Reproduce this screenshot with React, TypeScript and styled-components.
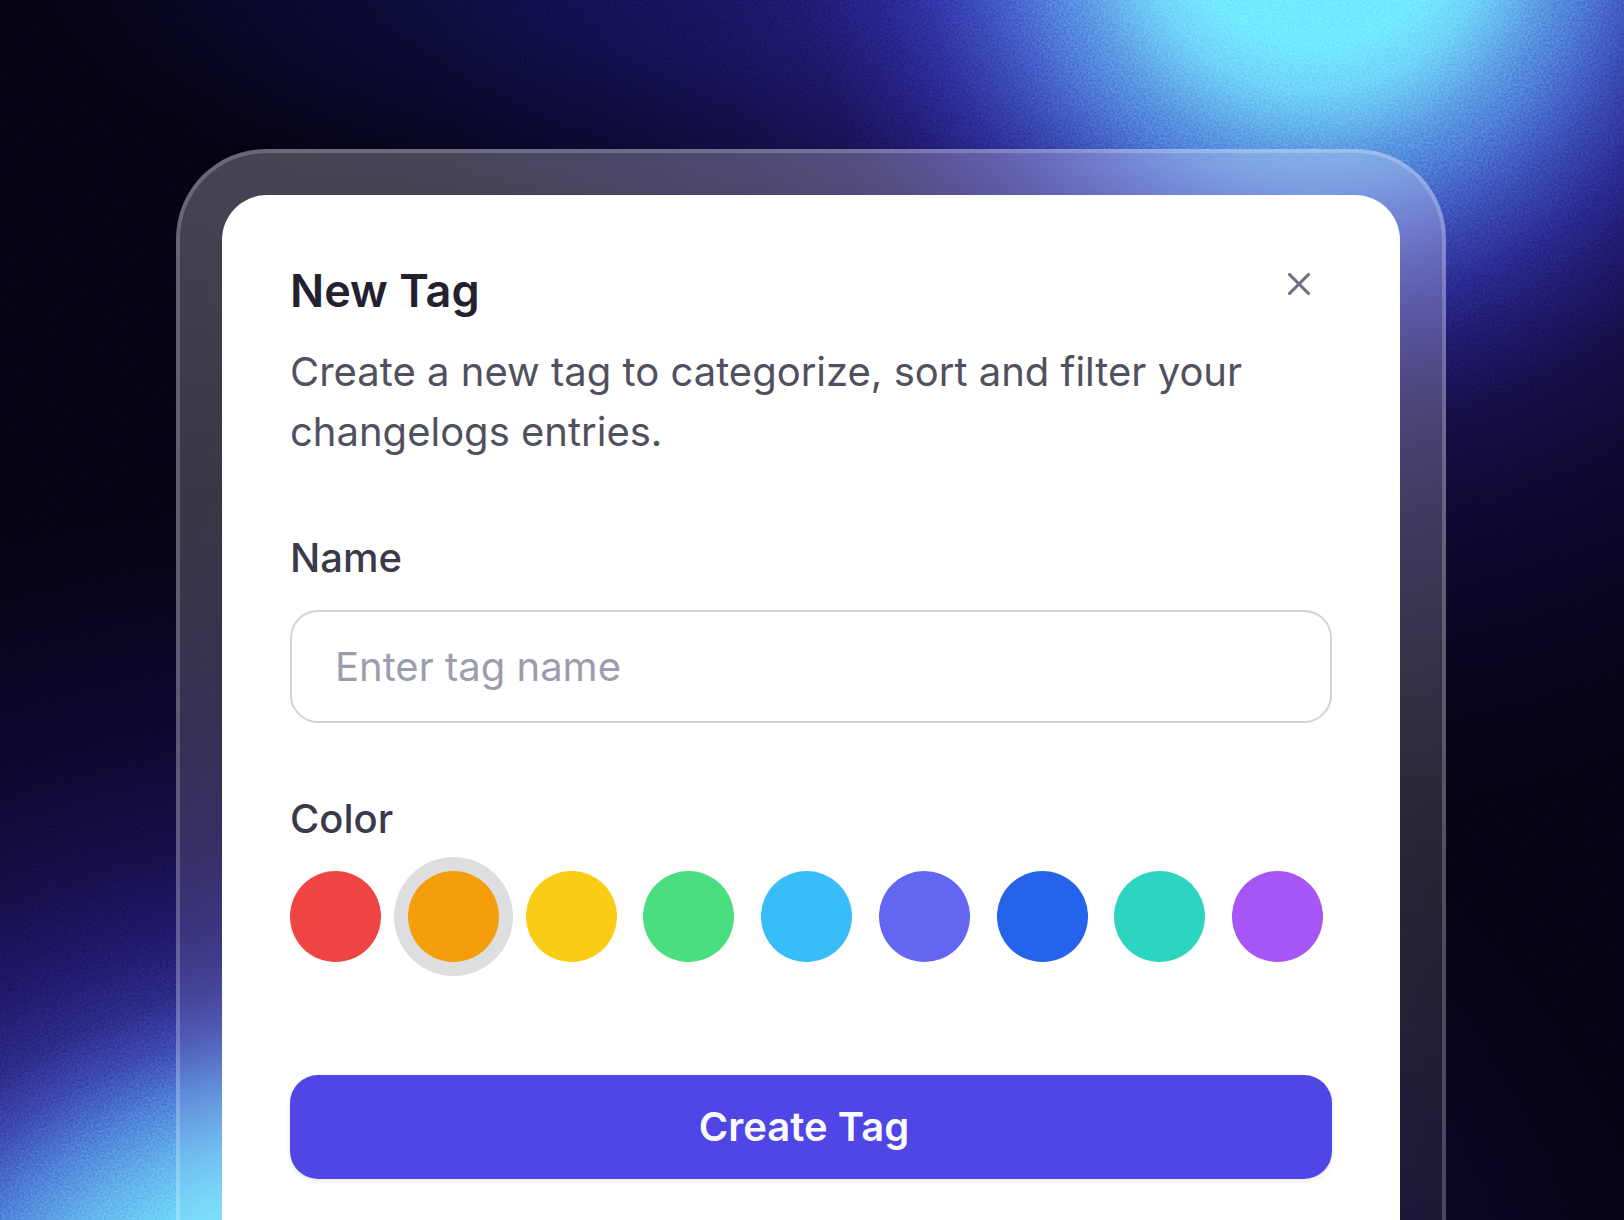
import React, { useState } from "react";
import styled, { createGlobalStyle } from "styled-components";
import { X } from "lucide-react";

const GlobalStyle = createGlobalStyle`
  *, *::before, *::after { box-sizing: border-box; }
  body {
    margin: 0;
    background: #04020f;
    font-family: Inter, "Liberation Sans", sans-serif;
  }
`;

const Page = styled.main`
  position: relative;
  isolation: isolate;
  overflow: hidden;
  display: flex;
  flex-direction: column;
  min-height: 100vh;
  padding: 149px 178px 0 176px;
  background-color: #050313;
  background-image:
    radial-gradient(
      circle at 81% -90px,
      #70eaff 0, #70eaff 135px, #6cd4f8 180px, #62b4ec 215px, #5594de 248px,
      #4a7ad2 282px, #405cc2 316px, #3444a8 350px, #262888 400px, #1c1864 450px,
      #120c3c 520px, #0a0622 620px, #040210 740px, #000 900px
    ),
    radial-gradient(
      640px 260px at 42% -40px,
      #0c0d40 0, #090b34 35%, #05061c 65%, #000 100%
    ),
    radial-gradient(
      1330px 950px at 25% calc(100% + 180px),
      #7aeaff 0, #74e6fe 22%, #6cd4f8 26%, #5fb0ea 31%, #4c80d4 36%,
      #3a48ac 41%, #28287e 46%, #1c1660 52%, #130c3e 60%, #090520 72%, #000 95%
    );
  background-blend-mode: screen;
`;

const Grain = styled.svg`
  position: absolute;
  inset: 0;
  z-index: -1;
  width: 100%;
  height: 100%;
  opacity: 0.14;
  mix-blend-mode: overlay;
`;

const Frame = styled.div`
  flex: 1;
  display: flex;
  padding: 42px 42px 0;
  border: 4px solid rgba(255, 255, 255, 0.2);
  border-bottom: 0;
  border-radius: 90px 90px 0 0;
  background: linear-gradient(
    rgba(250, 242, 255, 0.27),
    rgba(246, 244, 255, 0.2) 42%,
    rgba(250, 250, 255, 0.13) 70%,
    rgba(255, 255, 255, 0.07)
  ) border-box;
  backdrop-filter: blur(12px);
`;

const Card = styled.form`
  flex: 1;
  min-width: 0;
  padding: 64px 68px 40px;
  border-radius: 45px 45px 0 0;
  background: #fff;
`;

const Header = styled.header`
  display: flex;
  align-items: flex-start;
  justify-content: space-between;
`;

const Title = styled.h1`
  margin: 0;
  color: #232130;
  font-size: 45px;
  font-weight: 600;
  line-height: 64px;
`;

const CloseButton = styled.button`
  display: flex;
  align-items: center;
  justify-content: center;
  width: 66px;
  height: 50px;
  padding: 0;
  border: 0;
  background: none;
  color: #6f6d80;
  cursor: pointer;
`;

const Description = styled.p`
  margin: 19px 0 66px;
  color: #51505e;
  font-size: 40px;
  line-height: 60px;
`;

const Field = styled.div`
  display: flex;
  flex-direction: column;
  gap: 22px;
  margin-bottom: 66px;
`;

const Label = styled.label`
  color: #3b394a;
  font-size: 40px;
  font-weight: 500;
  line-height: 60px;
`;

const TextInput = styled.input`
  width: 100%;
  height: 113px;
  padding: 0 43px;
  border: 2px solid #d2d3da;
  border-radius: 28px;
  outline: 0;
  background: #fff;
  color: #232130;
  font: 400 40px Inter, "Liberation Sans", sans-serif;

  &::placeholder {
    color: #9b9dae;
    opacity: 1;
  }
`;

const ColorField = styled.fieldset`
  min-width: 0;
  margin: 0 0 113px;
  padding: 0;
  border: 0;
`;

const Legend = styled.legend`
  margin-bottom: 22px;
  padding: 0;
  color: #3b394a;
  font-size: 40px;
  font-weight: 500;
  line-height: 60px;
`;

const Swatches = styled.div`
  display: flex;
  justify-content: space-between;
  max-width: 1033px;
`;

const Swatch = styled.input<{ $color: string }>`
  appearance: none;
  width: 91px;
  height: 91px;
  margin: 0;
  border-radius: 50%;
  background: ${(p) => p.$color};
  cursor: pointer;

  &:checked {
    box-shadow: 0 0 0 14px #dedee1;
  }
`;

const SubmitButton = styled.button`
  display: block;
  width: 100%;
  height: 104px;
  padding: 0 14px 2px 0;
  border: 0;
  border-radius: 28px;
  background: #4f46e5;
  box-shadow: 0 2px 5px rgba(20, 20, 40, 0.1);
  color: #f9fafb;
  font: 600 40px Inter, "Liberation Sans", sans-serif;
  cursor: pointer;
`;

const colors = [
  { name: "Red", value: "#ef4444" },
  { name: "Orange", value: "#f59e0b" },
  { name: "Yellow", value: "#facc15" },
  { name: "Green", value: "#4ade80" },
  { name: "Sky", value: "#38bdf8" },
  { name: "Indigo", value: "#6366f1" },
  { name: "Blue", value: "#2563eb" },
  { name: "Teal", value: "#2dd4bf" },
  { name: "Purple", value: "#a855f7" },
];

export default function App() {
  const [color, setColor] = useState("Orange");

  return (
    <>
      <GlobalStyle />
      <Page>
        <Grain aria-hidden="true">
          <filter id="grain" colorInterpolationFilters="sRGB">
            <feTurbulence type="fractalNoise" baseFrequency="0.45" numOctaves="2" stitchTiles="stitch" />
            <feColorMatrix
              type="matrix"
              values="2 0 0 0 -0.5  2 0 0 0 -0.5  2 0 0 0 -0.5  0 0 0 0 1"
            />
          </filter>
          <rect width="100%" height="100%" filter="url(#grain)" />
        </Grain>
        <Frame>
          <Card onSubmit={(e) => e.preventDefault()}>
            <Header>
              <Title>New Tag</Title>
              <CloseButton type="button" aria-label="Close">
                <X size={38} strokeWidth={2} />
              </CloseButton>
            </Header>
            <Description>
              Create a new tag to categorize, sort and filter your changelogs entries.
            </Description>
            <Field>
              <Label htmlFor="tag-name">Name</Label>
              <TextInput id="tag-name" type="text" placeholder="Enter tag name" />
            </Field>
            <ColorField>
              <Legend>Color</Legend>
              <Swatches>
                {colors.map((c) => (
                  <Swatch
                    key={c.name}
                    type="radio"
                    name="color"
                    aria-label={c.name}
                    $color={c.value}
                    checked={color === c.name}
                    onChange={() => setColor(c.name)}
                  />
                ))}
              </Swatches>
            </ColorField>
            <SubmitButton type="submit">Create Tag</SubmitButton>
          </Card>
        </Frame>
      </Page>
    </>
  );
}
